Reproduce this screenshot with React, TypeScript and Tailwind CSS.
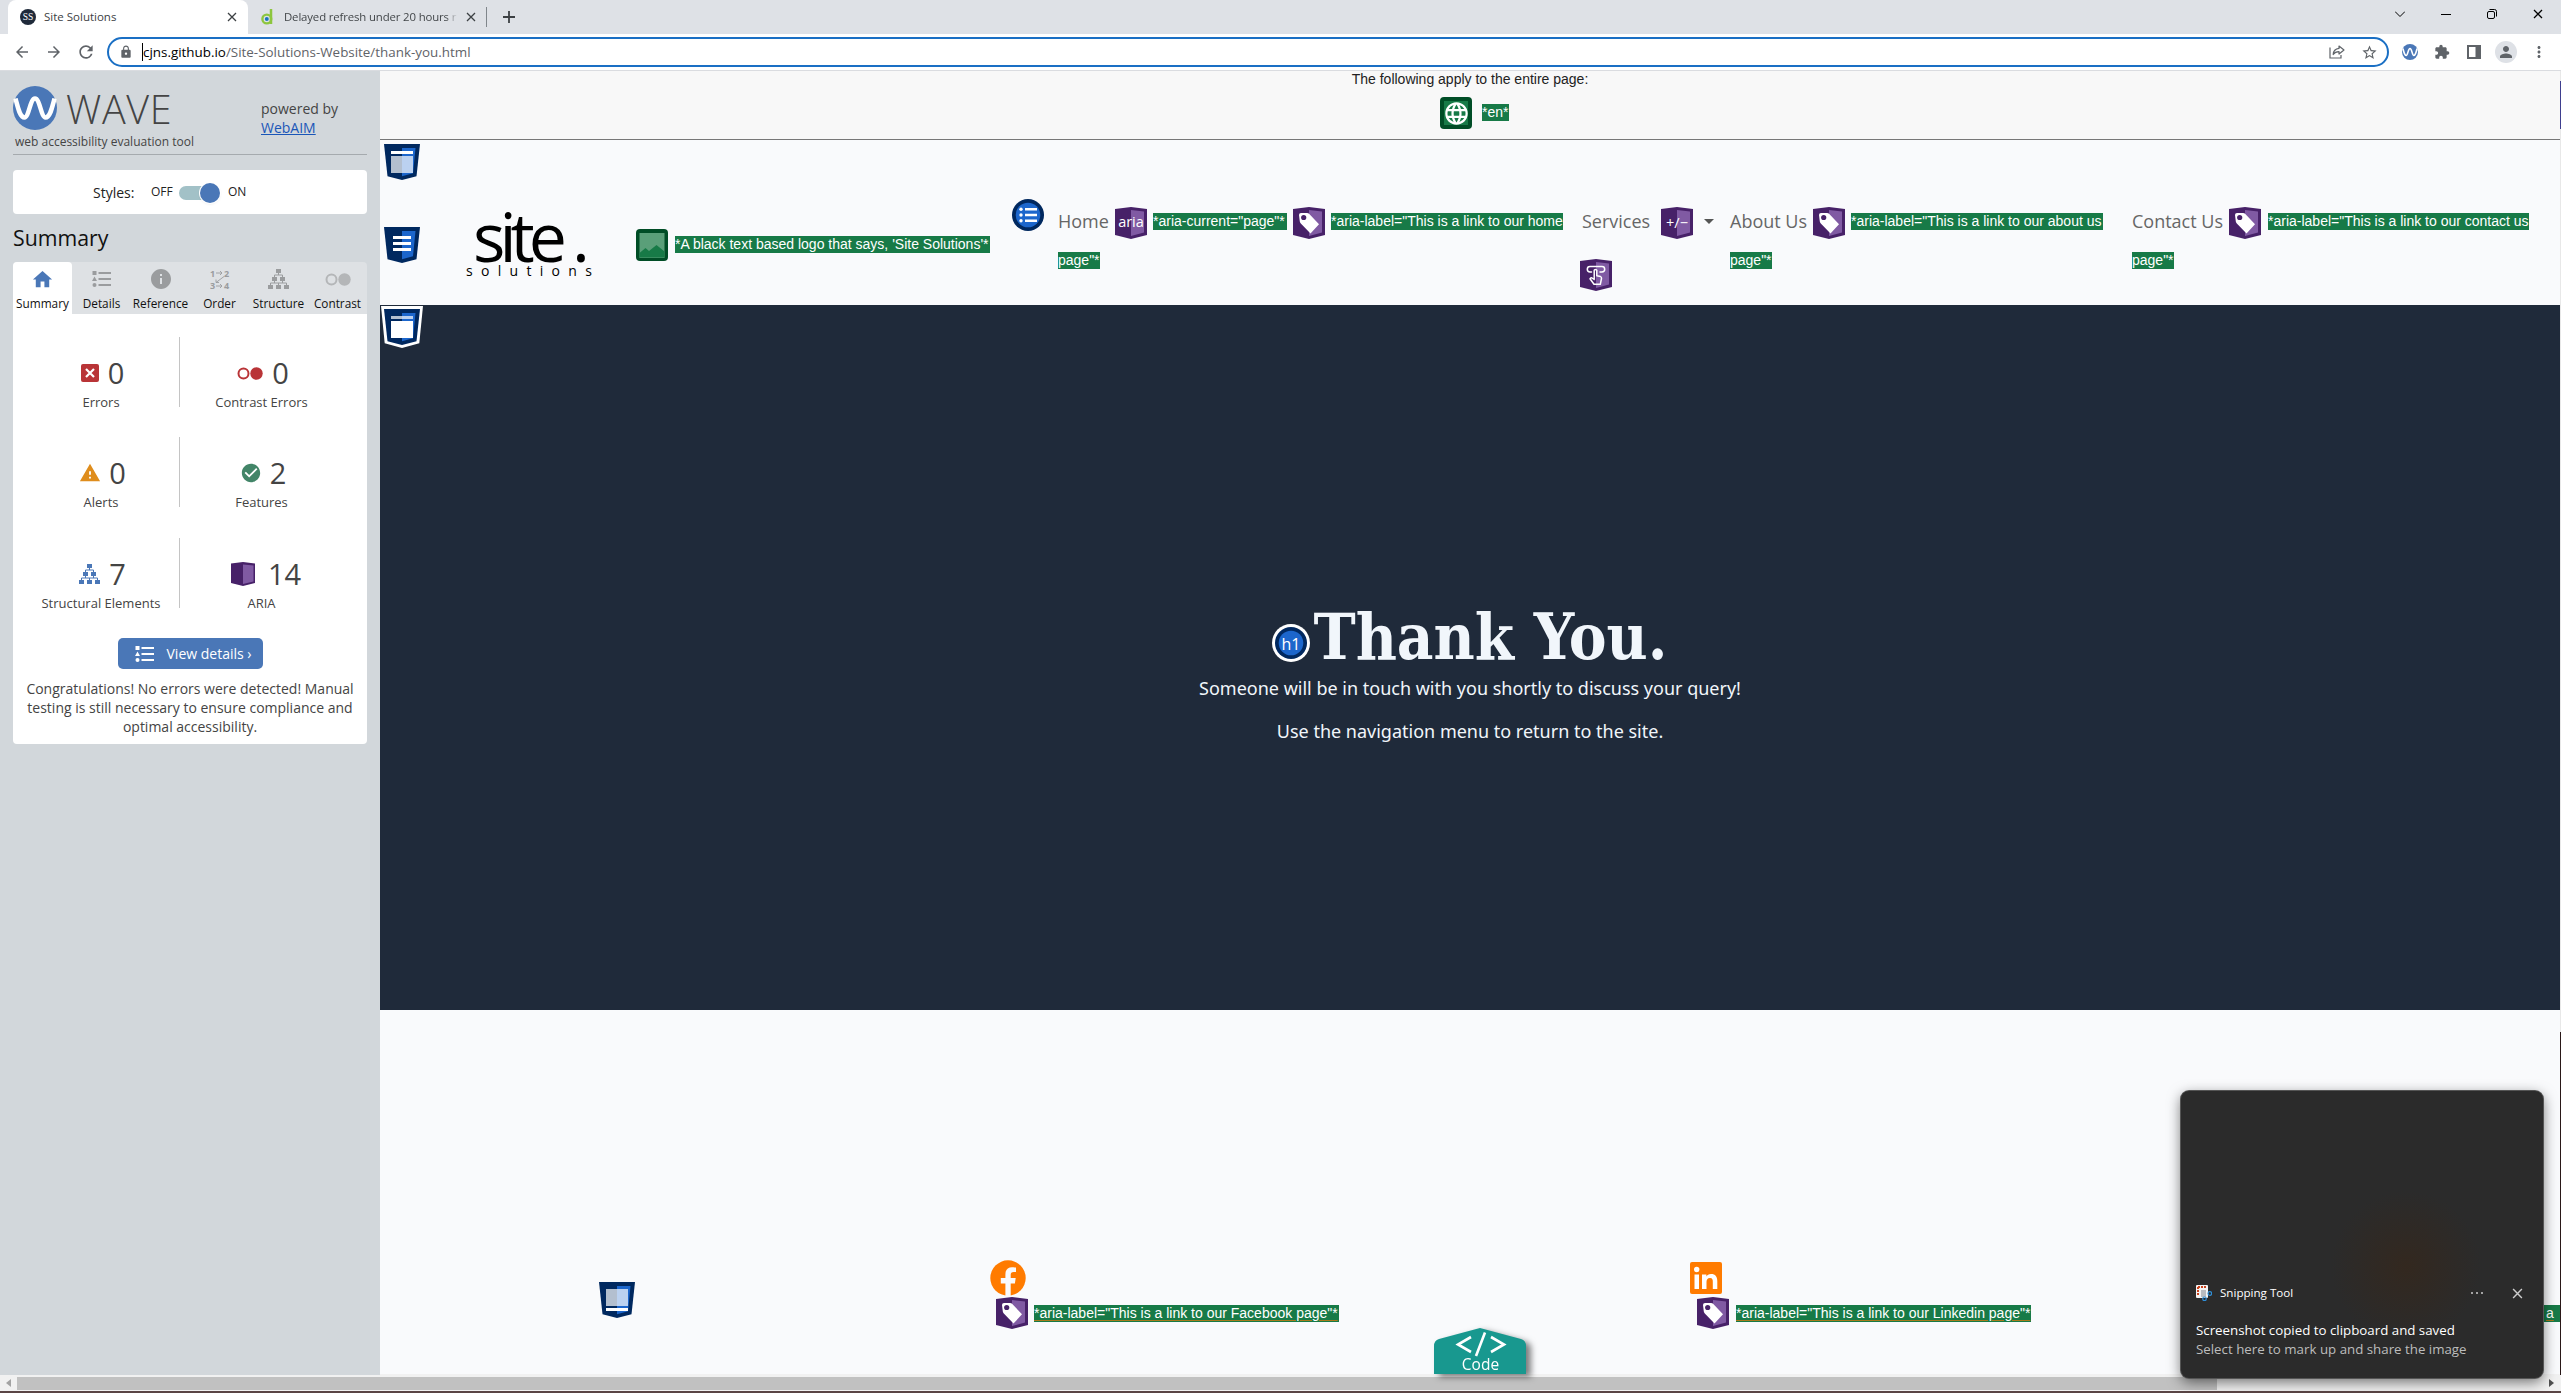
import React from "react";
import {
  MdArrowBack,
  MdArrowForward,
  MdRefresh,
  MdLock,
  MdStarBorder,
  MdExtension,
  MdPerson,
  MdMoreVert,
  MdHome,
  MdInfo,
  MdCheckCircle,
  MdWarning,
  MdLanguage,
} from "react-icons/md";

const sans = "font-['Open_Sans','Noto_Sans',sans-serif]";
const noto = "font-['Noto_Sans','Open_Sans',sans-serif]";
const arial = "font-['Liberation_Sans',Arial,sans-serif]";

function Cross({ className }: { className?: string }) {
  return (
    <svg viewBox="0 0 10 10" className={className} stroke="currentColor" strokeWidth="1.3" fill="none">
      <path d="M1 1L9 9M9 1L1 9" />
    </svg>
  );
}

function WaveMark({ className }: { className?: string }) {
  return (
    <svg viewBox="0 0 44 44" className={className}>
      <circle cx="22" cy="22" r="22" fill="#4a77b7" />
      <path
        d="M2.500 12.500C5 22 7 31.500 11.500 31.500C16 31.500 17 12.500 22 12.500C27 12.500 28 31.500 32.500 31.500C37 31.500 39 22 41.500 12.500"
        fill="none"
        stroke="#fff"
        strokeWidth="4.500"
      />
    </svg>
  );
}

function Badge({ kind, outlined }: { kind: "header" | "nav" | "main" | "footer"; outlined?: boolean }) {
  return (
    <svg viewBox="-3 -3 42 42" className="block h-[42px] w-[42px]">
      {outlined && <path d="M-3 -3H39L35.300 34.300L18 39L.7 34.300Z" fill="#fff" />}
      <path d="M0 0H36L32.500 32.300L18 36L3.500 32.300Z" fill="#00285f" />
      <path d="M18 4H31.500L29 29.300L18 32.300Z" fill="#1c66cc" />
      {kind === "header" && (
        <>
          <path d="M7 7H29V10H7Z" fill="#fff" />
          <path d="M7 12H29V29H7Z" fill="#fff" opacity=".7" />
        </>
      )}
      {kind === "nav" && <path d="M9 9H27V12H9ZM9 15H27V18H9ZM9 21H27V24H9Z" fill="#fff" />}
      {kind === "main" && (
        <>
          <path d="M7 7H29V10H7Z" fill="#fff" opacity=".7" />
          <path d="M7 12H29V29H7Z" fill="#fff" />
        </>
      )}
      {kind === "footer" && (
        <>
          <path d="M7 7H29V24H7Z" fill="#fff" opacity=".7" />
          <path d="M7 26H29V29H7Z" fill="#fff" />
        </>
      )}
    </svg>
  );
}

function Aria({ kind }: { kind: "aria" | "tag" | "expand" | "popup" }) {
  return (
    <svg viewBox="0 0 32 32" className="block h-8 w-8 shrink-0">
      <path d="M0 2L16 0L32 2V28L16 32L0 28Z" fill="#472168" />
      <path d="M16 3L29 4.500V25.500L16 29Z" fill="#805aa3" />
      {kind === "aria" && (
        <text x="16" y="19.500" textAnchor="middle" fontSize="14.500" fontFamily="Open Sans" fill="#fff">
          aria
        </text>
      )}
      {kind === "expand" && (
        <text x="16" y="21" textAnchor="middle" fontSize="14.500" fontFamily="Open Sans" fill="#fff">
          +/−
        </text>
      )}
      {kind === "tag" && (
        <>
          <path
            d="M6 8Q6 6 8 6H14Q15.500 6 16.300 7L26 17.300L17.500 26.500L7.800 16.500Q7 15.500 6.800 14.500Z"
            fill="#fff"
          />
          <circle cx="10.700" cy="10.500" r="2.600" fill="#472168" />
        </>
      )}
      {kind === "popup" && (
        <g fill="none" stroke="#fff" strokeWidth="1.500" strokeLinejoin="round" strokeLinecap="round">
          <path d="M11.500 13H10A2.700 2.700 0 0 1 10 7.600H22A2.700 2.700 0 0 1 22 13H20" />
          <path d="M14.200 20V11.300Q15.500 9.600 16.800 11.300V16.800L20.500 17.600Q21.700 18 21.500 19.500L20.300 25.300H14L10 19.800Q10.700 18.300 12 19L14.200 20.500" />
        </g>
      )}
    </svg>
  );
}

function Tree({ className }: { className?: string }) {
  return (
    <svg viewBox="0 0 21 20" className={className} fill="currentColor">
      <path d="M8 0H13V4H8ZM4 8H9V12H4ZM12 8H17V12H12ZM0 16H5V20H0ZM8 16H13V20H8ZM16 16H21V20H16Z" />
      <path
        d="M10.500 4V6M6.500 8V6H14.500V8M6.500 12V14M14.500 12V14M2.500 16V14H18.500V16M10.500 14V16"
        fill="none"
        stroke="currentColor"
        strokeWidth="1"
      />
    </svg>
  );
}

function ListIcon({ className }: { className?: string }) {
  return (
    <svg viewBox="0 0 19 16" className={className} fill="currentColor">
      <path d="M.5 0H4.500V4H.5ZM2.500 5.500L5 10H0ZM6.500 1H19V3H6.500ZM6.500 7H19V9H6.500ZM6.500 13H19V15H6.500Z" />
      <circle cx="2.500" cy="14" r="2" />
    </svg>
  );
}

function Rings({ className }: { className?: string }) {
  return (
    <svg viewBox="0 0 26 13" className={className}>
      <circle cx="6.500" cy="6.500" r="5" fill="none" stroke="currentColor" strokeWidth="2" />
      <circle cx="19.500" cy="6.500" r="6.200" fill="currentColor" />
    </svg>
  );
}

function TabItem({ icon, label, active }: { icon: React.ReactNode; label: string; active?: boolean }) {
  return (
    <div
      className={
        active
          ? "flex h-[52px] w-[59px] flex-col items-center rounded-t bg-white text-[#4a77b7]"
          : "flex h-[52px] w-[59px] flex-col items-center text-[#9a9c9e]"
      }
    >
      <div className="flex h-[34px] items-center justify-center">{icon}</div>
      <span className="-mt-[1px] whitespace-nowrap text-[11.800px] leading-4 text-[#111]">{label}</span>
    </div>
  );
}

function Stat({ icon, value, label, first }: { icon: React.ReactNode; value: string; label: string; first?: boolean }) {
  return (
    <div
      className={
        first
          ? "flex h-[70px] w-[167px] flex-col items-center border-r border-[#c4c4c4] pt-[16px] pl-[10px]"
          : "flex h-[70px] w-[163px] flex-col items-center pt-[16px]"
      }
    >
      <div className="flex h-[40px] items-center gap-[9px] pl-[3px] text-[29px] leading-[40px] text-[#444]">
        {icon}
        <span>{value}</span>
      </div>
      <span className="whitespace-nowrap text-[13px] leading-[18px] text-[#444]">{label}</span>
    </div>
  );
}

function Mark({ children, className }: { children: React.ReactNode; className: string }) {
  return (
    <span
      className={`${arial} block h-[17px] shrink-0 whitespace-nowrap bg-[#177a47] text-[14px] leading-[17px] text-white ${className}`}
    >
      {children}
    </span>
  );
}

function BrowserChrome() {
  return (
    <header className={`${sans} flex flex-col`}>
      <div className="flex h-[34px] items-end bg-[#dee1e6] pl-2">
        <div className="flex h-[34px] w-60 items-center rounded-t-lg bg-white pl-3 pr-[11px]">
          <svg viewBox="0 0 16 16" className="h-4 w-4">
            <circle cx="8" cy="8" r="8" fill="#1f2a3a" />
            <text x="8" y="11" textAnchor="middle" fontSize="9.500" fontFamily="Liberation Serif" fill="#fff">
              SS
            </text>
          </svg>
          <span className="ml-2 flex-1 text-[11.500px] text-[#3c4043]">Site Solutions</span>
          <Cross className="h-[10px] w-[10px] text-[#3c4043]" />
        </div>
        <div className="flex h-[34px] w-[238px] items-center border-r border-transparent pl-[13px]">
          <svg viewBox="0 0 12 16" className="h-4 w-3" fill="none">
            <path d="M10 0V15" stroke="#8dc63f" strokeWidth="2.500" />
            <circle cx="5.800" cy="10" r="4.400" stroke="#8dc63f" strokeWidth="2.400" />
            <circle cx="5.800" cy="10" r="2" fill="#1b75bc" />
          </svg>
          <span className="ml-[11px] w-[174px] whitespace-nowrap bg-gradient-to-r from-[#3c4043] from-93% to-transparent to-100% bg-clip-text text-[11.400px] tracking-[-0.14px] text-transparent">
            Delayed refresh under 20 hours r
          </span>
          <Cross className="ml-[8px] h-[10px] w-[10px] text-[#3c4043]" />
        </div>
        <div className="mb-[7px] h-5 w-px bg-[#80868b]" />
        <svg viewBox="0 0 12 12" className="mb-[11px] ml-[16px] h-3 w-3" stroke="#3c4043" strokeWidth="1.800">
          <path d="M6 0V12M0 6H12" />
        </svg>
        <div className="mb-[6px] ml-auto flex h-7 items-center gap-9 pr-[18px] text-black">
          <svg viewBox="0 0 10 6" className="h-[6px] w-[10px]" fill="none" stroke="currentColor">
            <path d="M0 .5L5 5.500L10 .5" />
          </svg>
          <div className="h-px w-[10px] bg-black" />
          <svg viewBox="0 0 10 10" className="h-[10px] w-[10px]" fill="none" stroke="currentColor">
            <rect x=".5" y="2.500" width="7" height="7" rx="1.500" />
            <path d="M2.500 .5H7.500Q9.500 .5 9.500 2.500V7.500" />
          </svg>
          <Cross className="h-[10px] w-[10px]" />
        </div>
      </div>
      <div className="flex h-[37px] items-center border-b border-[#dadce0] bg-white pl-[13px] pr-[12px] text-[#5f6368]">
        <MdArrowBack className="h-[18px] w-[18px]" />
        <MdArrowForward className="ml-[14px] h-[18px] w-[18px]" />
        <MdRefresh className="ml-[13px] h-5 w-5" />
        <div className="ml-[11px] flex h-[30px] w-[2282px] items-center rounded-full border-2 border-[#1a6fc4] pl-[10px] pr-[9px]">
          <MdLock className="h-[14px] w-[14px]" />
          <span className="ml-[9px] h-[18px] w-px bg-black" />
          <span className="flex-1 whitespace-nowrap text-[13.400px] leading-[20px]">
            <span className="text-black">cjns.github.io</span>/Site-Solutions-Website/thank-you.html
          </span>
          <svg viewBox="0 0 16 14" className="mr-[16px] h-[14px] w-4" fill="none" stroke="currentColor" strokeWidth="1.200">
            <path d="M1 2.500V13H12V10" />
            <path d="M10 1L15 5L10 9V6.600Q6 6.600 4.200 9.500Q4.500 4 10 3.400Z" strokeLinejoin="round" />
          </svg>
          <MdStarBorder className="h-[17px] w-[17px]" />
        </div>
        <WaveMark className="ml-[13px] h-4 w-4" />
        <MdExtension className="ml-[16px] h-4 w-4" />
        <svg viewBox="0 0 14 14" className="ml-[17px] h-[14px] w-[14px]">
          <path d="M0 0H14V14H0ZM2 2V12H8.500V2Z" fill="currentColor" fillRule="evenodd" />
        </svg>
        <div className="ml-[14px] flex h-[22px] w-[22px] items-center justify-center rounded-full bg-[#dee1e6]">
          <MdPerson className="h-[18px] w-[18px]" />
        </div>
        <MdMoreVert className="ml-[13px] h-[18px] w-[18px]" />
      </div>
    </header>
  );
}

function Sidebar() {
  return (
    <aside className={`${sans} flex h-[1304px] w-[380px] shrink-0 flex-col bg-[#d2d7db] px-[13px]`}>
      <div className="flex h-[84px] border-b border-[#a5aaae]">
        <div className="w-[248px] pt-[15px]">
          <div className="flex h-11">
            <WaveMark className="h-11 w-11" />
            <span className="ml-[9px] text-[39.500px] font-light leading-[46px] tracking-[0.7px] text-[#444]">WAVE</span>
          </div>
          <span className="ml-[2px] block whitespace-nowrap text-[12px] leading-[23px] text-[#444]">
            web accessibility evaluation tool
          </span>
        </div>
        <div className="pt-[28px] text-[14px] leading-[19px] text-[#444]">
          powered by
          <br />
          <span className="text-[#1a56b8] underline">WebAIM</span>
        </div>
      </div>
      <div className="mt-[15px] flex h-11 items-center rounded bg-white pl-[80px] text-[14px] text-[#222]">
        <span className="w-[58px]">Styles:</span>
        <span className="w-[28px] text-[12px]">OFF</span>
        <div className="mt-[2px] flex h-[14px] w-[41px] items-center justify-end rounded-full bg-[#a2c1c7]">
          <div className="h-5 w-5 shrink-0 rounded-full bg-[#4a77b7] shadow ring-1 ring-white" />
        </div>
        <span className="ml-[8px] text-[12px]">ON</span>
      </div>
      <h2 className="mt-[9px] h-[39px] text-[21.300px] leading-[30px] text-[#111]">Summary</h2>
      <div className="flex rounded-t bg-[#dee1e4]">
        <TabItem active label="Summary" icon={<MdHome className="h-[23px] w-[23px]" />} />
        <TabItem label="Details" icon={<ListIcon className="h-4 w-[19px]" />} />
        <TabItem label="Reference" icon={<MdInfo className="h-6 w-6" />} />
        <TabItem
          label="Order"
          icon={
            <svg viewBox="0 0 20 20" className="h-5 w-5" fill="currentColor" stroke="none">
              <text x="0" y="7.500" fontSize="9" fontWeight="700" fontFamily="Open Sans">1</text>
              <text x="14" y="7.500" fontSize="9" fontWeight="700" fontFamily="Open Sans">2</text>
              <text x="0" y="20" fontSize="9" fontWeight="700" fontFamily="Open Sans">3</text>
              <text x="14" y="20" fontSize="9" fontWeight="700" fontFamily="Open Sans">4</text>
              <path
                d="M6 4H12M10 2L12 4L10 6M6 17H12M10 15L12 17L10 19M14 7.500L6 13.500M6 10.500V13.500H9"
                fill="none"
                stroke="currentColor"
                strokeWidth=".9"
              />
            </svg>
          }
        />
        <TabItem label="Structure" icon={<Tree className="h-5 w-[21px]" />} />
        <TabItem label="Contrast" icon={<Rings className="h-[13px] w-[26px] text-[#b4b6b8]" />} />
      </div>
      <div className="flex h-[430px] flex-col items-center rounded-b bg-white pt-[23px]">
        <div className="mb-[30px] flex w-full">
          <Stat
            first
            label="Errors"
            value="0"
            icon={
              <svg viewBox="0 0 18 18" className="h-[18px] w-[18px]">
                <rect width="18" height="18" rx="2" fill="#b93437" />
                <path d="M5 5L13 13M13 5L5 13" stroke="#fff" strokeWidth="2.200" />
              </svg>
            }
          />
          <Stat label="Contrast Errors" value="0" icon={<Rings className="h-[13px] w-[26px] text-[#b93437]" />} />
        </div>
        <div className="mb-[31px] flex w-full">
          <Stat first label="Alerts" value="0" icon={<MdWarning className="-mr-px h-[22px] w-[22px] text-[#df8d1c]" />} />
          <Stat label="Features" value="2" icon={<MdCheckCircle className="-mr-px h-[22px] w-[22px] text-[#428568]" />} />
        </div>
        <div className="mb-[30px] flex w-full">
          <Stat first label="Structural Elements" value="7" icon={<Tree className="h-5 w-[21px] text-[#4a77b7]" />} />
          <Stat
            label="ARIA"
            value="14"
            icon={
              <svg viewBox="0 0 24 24" className="ml-[6px] mr-[4px] h-6 w-6">
                <path d="M0 1.500L12 0L24 1.500V21L12 24L0 21Z" fill="#472168" />
                <path d="M12 2.500L22.500 3.500V19.500L12 22Z" fill="#805aa3" />
              </svg>
            }
          />
        </div>
        <div className="flex h-[31px] w-[145px] shrink-0 items-center rounded-[5px] bg-[#4a77b7] pl-[17px] text-[14px] text-white">
          <ListIcon className="h-4 w-[19px]" />
          <span className="ml-[13px] whitespace-nowrap">View details ›</span>
        </div>
        <p className="mt-[10px] whitespace-nowrap text-center text-[14px] leading-[19px] text-[#444]">
          Congratulations! No errors were detected! Manual
          <br />
          testing is still necessary to ensure compliance and
          <br />
          optimal accessibility.
        </p>
      </div>
    </aside>
  );
}

function PageHeader() {
  return (
    <div className="flex h-[165px] bg-[#f9fafc]">
      <div className="flex w-[86px] flex-col gap-[41px] pl-px pt-[1px]">
        <Badge kind="header" />
        <Badge kind="nav" />
      </div>
      <div className={`${sans} w-[170px] pt-[60px] text-black`}>
        <div className="flex h-[66px] items-end pl-[7px] text-[68px] font-medium leading-[60px]">
          <span className="w-[99px] tracking-[-6px]">site</span>
          <span>.</span>
        </div>
        <div className="-mt-[3px] text-[14px] leading-[16px] tracking-[8.300px]">solutions</div>
      </div>
      <div className="flex w-[376px] items-start pt-[89px]">
        <svg viewBox="0 0 32 32" className="mr-[7px] h-8 w-8">
          <rect width="32" height="32" rx="4" fill="#004d26" />
          <rect x="3.500" y="4" width="25" height="25" fill="#5a9f79" />
          <path d="M3.500 24L9.500 19L13 22L20.500 16L28.500 22.500V28.500H3.500Z" fill="#177a47" />
        </svg>
        <Mark className="mt-[7px] w-[315px]">*A black text based logo that says, 'Site Solutions'*</Mark>
      </div>
      <div className="w-[46px] pt-[59px]">
        <svg viewBox="0 0 32 32" className="h-8 w-8">
          <circle cx="16" cy="16" r="16" fill="#00285f" />
          <circle cx="16" cy="16" r="12.300" fill="#1c66cc" />
          <path d="M13 9H25V11.500H13ZM13 14.800H25V17.300H13ZM13 20.500H25V23H13Z" fill="#fff" />
          <circle cx="9" cy="10.200" r="1.700" fill="#fff" />
          <circle cx="9" cy="16" r="1.700" fill="#fff" />
          <circle cx="9" cy="21.800" r="1.700" fill="#fff" />
        </svg>
      </div>
      <nav className={`${sans} grid flex-1 grid-cols-[524px_148px_402px_1fr] pt-[67px] text-[18px] text-[#666]`}>
        <div>
          <div className="flex h-8 items-center whitespace-nowrap">
            <span className="w-[57px] pb-[3px]">Home</span>
            <Aria kind="aria" />
            <Mark className="ml-[6px] mb-[3px] w-[134px]">*aria-current="page"*</Mark>
            <span className="ml-[6px]">
              <Aria kind="tag" />
            </span>
            <Mark className="ml-[6px] mb-[3px] w-[232px]">*aria-label="This is a link to our home</Mark>
          </div>
          <Mark className="mt-[13px] w-[42px]">page"*</Mark>
        </div>
        <div>
          <div className="flex h-8 items-center">
            <span className="w-[79px] pb-[3px]">Services</span>
            <Aria kind="expand" />
            <div className="mb-[4px] ml-[11px] border-x-[5px] border-t-[5px] border-x-transparent border-t-[#555]" />
          </div>
          <div className="-ml-[2px] mt-5">
            <Aria kind="popup" />
          </div>
        </div>
        <div>
          <div className="flex h-8 items-center whitespace-nowrap">
            <span className="w-[83px] pb-[3px]">About Us</span>
            <Aria kind="tag" />
            <Mark className="ml-[6px] mb-[3px] w-[252px]">*aria-label="This is a link to our about us</Mark>
          </div>
          <Mark className="mt-[13px] w-[42px]">page"*</Mark>
        </div>
        <div>
          <div className="flex h-8 items-center whitespace-nowrap">
            <span className="w-[97px] pb-[3px]">Contact Us</span>
            <Aria kind="tag" />
            <Mark className="ml-[7px] mb-[3px] w-[261px]">*aria-label="This is a link to our contact us</Mark>
          </div>
          <Mark className="mt-[13px] w-[42px]">page"*</Mark>
        </div>
      </nav>
    </div>
  );
}

function Hero() {
  return (
    <main className="flex h-[705px] flex-col items-center bg-[#1f2a3a] pt-px text-[#f1f6fb]">
      <div className="self-start pl-px">
        <Badge kind="main" outlined />
      </div>
      <div className="mt-[251px] flex h-[76px] items-center">
        <svg viewBox="0 0 38 38" className="mt-[12px] h-[38px] w-[38px]">
          <circle cx="19" cy="19" r="19" fill="#fff" />
          <circle cx="19" cy="19" r="16" fill="#00285f" />
          <circle cx="19" cy="19" r="12.300" fill="#1c66cc" />
          <text x="19" y="25.500" textAnchor="middle" fontSize="16" fontFamily="Open Sans" fill="#fff">
            h1
          </text>
        </svg>
        <h1 className="ml-[3px] whitespace-nowrap font-['DejaVu_Serif_Condensed','DejaVu_Serif',serif] text-[63px] font-bold leading-[76px]">
          Thank You.
        </h1>
      </div>
      <p className={`${noto} text-[18px] leading-[27px]`}>
        Someone will be in touch with you shortly to discuss your query!
      </p>
      <p className={`${noto} mt-4 text-[18px] leading-[27px]`}>Use the navigation menu to return to the site.</p>
    </main>
  );
}

function CodeTab() {
  return (
    <div className="h-[46px] w-[92px] drop-shadow-[5px_3px_3px_rgba(0,0,0,0.5)]">
      <svg viewBox="0 0 92 46" className="h-[46px] w-[92px]">
        <path d="M0 46V18Q0 12.500 5 11L46 0L87 11Q92 12.500 92 18V46Z" fill="#18988f" />
        <path d="M37 9L24 16.500L37 24M57 9L70 16.500L57 24M51 4.500L42 28" fill="none" stroke="#fff" strokeWidth="2.600" />
        <text x="46.500" y="42" textAnchor="middle" fontSize="15.500" fontFamily="Open Sans" fill="#fff">
          Code
        </text>
      </svg>
    </div>
  );
}

function Footer() {
  return (
    <footer className="flex h-[364px] bg-[#f9fafc]">
      <div className="w-[610px] pl-[216px] pt-[269px]">
        <Badge kind="footer" />
      </div>
      <div className="w-[444px] pt-[250px]">
        <svg viewBox="0 0 36 36" className="h-9 w-9">
          <circle cx="18" cy="18" r="17.700" fill="#ff7b00" />
          <path
            d="M15.400 36V23.500H10.800V18H15.400V14.200C15.400 9.600 18 7.200 22 7.200C24 7.200 26 7.600 26 7.600V12H23.700C21.400 12 20.700 13.400 20.700 14.800V18H25.700L24.900 23.500H20.700V36Z"
            fill="#f9fafc"
          />
        </svg>
        <div className="flex h-[34px] items-center pl-[6px]">
          <Aria kind="tag" />
          <Mark className="ml-[6px] w-[305px] underline decoration-[#a87b1c] underline-offset-2">
            *aria-label="This is a link to our Facebook page"*
          </Mark>
        </div>
      </div>
      <div className="w-[256px] self-end">
        <CodeTab />
      </div>
      <div className="w-[870px] shrink-0 pt-[252px]">
        <svg viewBox="0 0 32 32" className="h-8 w-8">
          <rect width="32" height="32" rx="2" fill="#ff7b00" />
          <path
            d="M4.500 12.500H9V27H4.500ZM12 12.500H16.400V14.500C17.200 13.100 18.700 12.100 21 12.100C25.500 12.100 27.300 14.800 27.300 19.200V27H22.800V20C22.800 17.800 22.500 16.100 20 16.100C17.400 16.100 16.500 17.900 16.500 20V27H12Z"
            fill="#fff"
          />
          <circle cx="6.700" cy="7.500" r="2.700" fill="#fff" />
        </svg>
        <div className="mt-[2px] flex h-[34px] items-center pl-[7px]">
          <Aria kind="tag" />
          <Mark className="ml-[7px] w-[295px] underline decoration-[#a87b1c] underline-offset-2">
            *aria-label="This is a link to our Linkedin page"*
          </Mark>
          <Mark className="ml-auto w-[18px] pl-[4px] underline decoration-[#a87b1c] underline-offset-2">a</Mark>
        </div>
      </div>
    </footer>
  );
}

function Toast() {
  return (
    <div
      className={`${sans} absolute left-[2181px] top-[1091px] flex h-[287px] w-[362px] flex-col rounded-lg bg-[#2b2b2b] bg-[radial-gradient(circle_at_225px_175px,#33281f_0,#2b2b2b_75px)] px-[15px] pt-[192px] text-white shadow-[0_4px_14px_rgba(0,0,0,0.55)] ring-1 ring-[#555]`}
    >
      <div className="flex h-5 items-center">
        <svg viewBox="0 0 16 16" className="h-4 w-4">
          <rect width="12" height="13" rx="1" fill="#f3f3f3" />
          <path d="M2 2H10M2 2V10" stroke="#c8421c" strokeWidth="2" strokeDasharray="2 1" />
          <path d="M5 5H10V12H5Z" fill="#b9bcc0" />
          <circle cx="8.500" cy="13.800" r="1.800" fill="none" stroke="#2f8fd8" strokeWidth="1.200" />
          <circle cx="13.800" cy="8.500" r="1.800" fill="none" stroke="#2f8fd8" strokeWidth="1.200" />
        </svg>
        <span className="ml-2 text-[11.600px]">Snipping Tool</span>
        <span className="ml-auto flex gap-[3px]">
          <i className="h-[2px] w-[2px] rounded-full bg-[#ccc]" />
          <i className="h-[2px] w-[2px] rounded-full bg-[#ccc]" />
          <i className="h-[2px] w-[2px] rounded-full bg-[#ccc]" />
        </span>
        <Cross className="ml-[29px] mr-[5px] h-[11px] w-[11px] text-[#ccc]" />
      </div>
      <div className="mt-[18px] whitespace-nowrap text-[13.300px] leading-[19px]">
        Screenshot copied to clipboard and saved
        <br />
        <span className="text-[#bdbdbd]">Select here to mark up and share the image</span>
      </div>
    </div>
  );
}

export default function App() {
  return (
    <div className="relative flex h-[1393px] w-[2561px] flex-col overflow-hidden bg-[#f1f1f1]">
      <BrowserChrome />
      <div className="flex h-[1304px]">
        <Sidebar />
        <div className="flex w-[2180px] flex-col">
          <div className={`${arial} flex h-[69px] flex-col items-center border-b border-[#777] bg-[#f8f8f8] text-[14px]`}>
            <span className="h-[26px] whitespace-nowrap leading-[17px] text-[#222]">The following apply to the entire page:</span>
            <div className="flex h-8 items-center pl-[9px]">
              <div className="mr-[10px] flex h-8 w-8 items-center justify-center rounded bg-[#004d26]">
                <div className="flex h-6 w-6 items-center justify-center bg-[#177a47]">
                  <MdLanguage className="h-[27px] w-[27px] shrink-0 text-white" />
                </div>
              </div>
              <Mark className="mb-[2px] w-[27px]">*en*</Mark>
            </div>
          </div>
          <PageHeader />
          <Hero />
          <Footer />
        </div>
        <div className="flex w-px flex-col bg-[#e8e8e8] pt-[10px]">
          <div className="h-[48px] bg-[#3f3f8f]" />
          <div className="mt-[903px] h-[343px] bg-[#2a1818]" />
        </div>
      </div>
      <div className="flex h-4 items-center">
        <div className="ml-[6px] border-y-4 border-r-[5px] border-y-transparent border-r-[#a3a3a3]" />
        <div className="ml-[6px] h-[13px] w-[2200px] bg-[#c1c1c1]" />
        <div className="ml-auto mr-[7px] border-y-4 border-l-[5px] border-y-transparent border-l-[#505050]" />
      </div>
      <div className="h-[2px] bg-[#5a4545]" />
      <Toast />
    </div>
  );
}
